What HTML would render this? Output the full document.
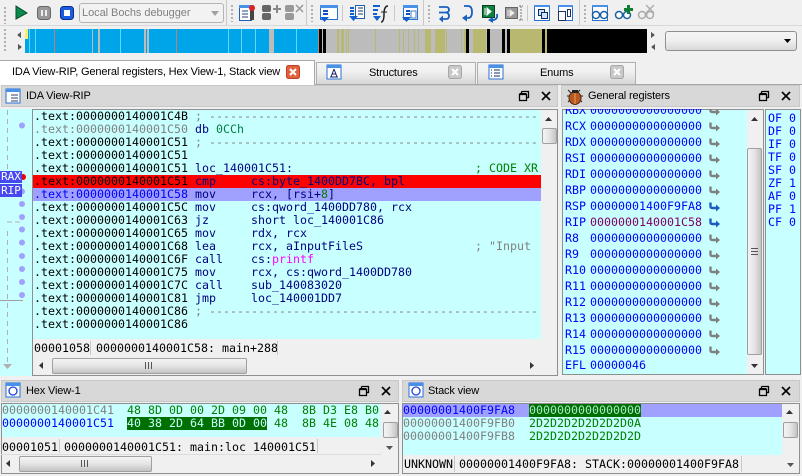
<!DOCTYPE html>
<html><head><meta charset="utf-8"><style>
html,body{margin:0;padding:0}
body{width:802px;height:476px;overflow:hidden;background:#f0f0f0;position:relative;font-family:"Liberation Sans",sans-serif;font-size:11px;letter-spacing:-.15px;color:#000}
div,span.a,svg{position:absolute}
.m{font-family:"DejaVu Sans Mono","Liberation Mono",monospace;font-size:11.63px;line-height:13px;white-space:pre;letter-spacing:0}
.l{left:0;height:13px;right:0;padding-left:1px}
.t{background:#d8d8d8;height:21px;border:1px solid #c8c8c8;box-sizing:border-box}
.tt{white-space:pre;line-height:14px;height:14px}
.c{background:#c8ffff}
.bx{border:1px solid #8c9090;box-sizing:border-box;background:#c8ffff}
.n{color:#000080}.g{color:#008000}.gr{color:#808080}.b{color:#0000ff}.k{color:#000}.y{color:#008040}
.st{background:#f0f0f0}
.sb{background:#f0f0f0}
.th{background:linear-gradient(90deg,#f4f4f4,#e4e4e4 50%,#c4c4c4);border:1px solid #a0a0a0;border-radius:2px;box-sizing:border-box}
.th2{background:linear-gradient(180deg,#f4f4f4,#e4e4e4 50%,#c4c4c4);border:1px solid #a0a0a0;border-radius:2px;box-sizing:border-box}
.sep{width:1px;background:#c8c8c8}
.grip{width:2px;background:repeating-linear-gradient(180deg,#b0b0b0 0 2px,transparent 2px 4px)}
.tab{background:linear-gradient(180deg,#f4f4f4,#f0f0f0 40%,#d6d6d6);border:1px solid #b0b0b0;border-bottom:0;box-sizing:border-box}
</style></head><body>
<svg width="0" height="0" style="position:absolute"><defs>
<symbol id="ag" viewBox="0 0 12 10"><path d="M1.5 0.5V4.5Q1.5 6 3.5 6H7" fill="none" stroke="#808080" stroke-width="2.4"/><path d="M7 2.5L11 6L7 9.5Z" fill="#808080"/></symbol>
<symbol id="ab" viewBox="0 0 12 10"><path d="M1.5 0.5V4.5Q1.5 6 3.5 6H7" fill="none" stroke="#1c5cc0" stroke-width="2.4"/><path d="M7 2.5L11 6L7 9.5Z" fill="#1c5cc0"/></symbol>
<symbol id="rs" viewBox="0 0 12 12"><path d="M3.5 1.5H10.5V7.5H8.5M3.5 1.5V3.5M1.5 4.5H8.5V10.5H1.5Z M1.5 3.7H8.5" fill="none" stroke="#000" stroke-width="1.3"/></symbol>
<symbol id="xx" viewBox="0 0 12 12"><path d="M2 2L10 10M10 2L2 10" stroke="#000" stroke-width="1.6"/></symbol>
<symbol id="win" viewBox="0 0 16 16"><rect x="1" y="1" width="14" height="14" fill="#fff" stroke="#2870d8"/><rect x="1" y="1" width="14" height="3" fill="#4890e8"/></symbol>
</defs></svg>

<!-- toolbar -->
<div class="grip" style="left:4px;top:7px;height:17px"></div>
<svg style="left:0;top:0" width="802" height="26">
<path d="M16 6L27 13L16 19Z" fill="#0a8a4a" stroke="#0a4a2a"/>
<rect x="37.500" y="6.500" width="13" height="13" rx="3" fill="#999" stroke="#666"/><rect x="41" y="10" width="2" height="6" fill="#eee"/><rect x="45" y="10" width="2" height="6" fill="#eee"/>
<rect x="60.500" y="6.500" width="13" height="13" rx="3" fill="#1a5ce0" stroke="#0a2a90"/><rect x="64" y="10" width="6" height="6" fill="#fff"/>
<!-- group 2 -->
<rect x="239.500" y="7.500" width="12" height="13" fill="#fff" stroke="#2060b0"/><rect x="239" y="5" width="15" height="3" fill="#4890e8"/><path d="M242 11h6M242 14h6M242 17h6" stroke="#204080"/><rect x="250" y="9" width="4" height="11" fill="#444"/><circle cx="252" cy="8" r="3" fill="#e02020"/>
<g fill="#666"><rect x="262" y="5" width="9" height="7" rx="2"/><rect x="262" y="13" width="9" height="7" rx="2"/><path d="M273 8h3v-3h2v3h3v2h-3v3h-2v-3h-3z" fill="#888"/></g>
<g fill="#999"><rect x="285" y="5" width="9" height="7" rx="2"/><rect x="285" y="13" width="9" height="7" rx="2"/><path d="M296 5l7 7M303 5l-7 7" stroke="#999" stroke-width="1.500"/></g>
<!-- group 3 -->
<rect x="320.500" y="5.500" width="17" height="14" fill="#fff" stroke="#2870d8"/><rect x="320" y="5" width="18" height="3" fill="#4890e8"/><path d="M323 11h5M323 14h5" stroke="#1050c0" stroke-width="2"/><path d="M320 17h9l-4.500 5z" fill="#1060d0"/>
<rect x="355.500" y="5.500" width="9" height="13" fill="#fff" stroke="#2060b0"/><path d="M358 8h5M358 11h5M358 14h5" stroke="#203060"/><path d="M350 8h4M350 11h4M350 14h4" stroke="#1060d0" stroke-width="2"/><path d="M349 16h9l-4.500 5z" fill="#1060d0"/>
<path d="M373 6h7M373 10h5M373 14h4" stroke="#1060d0" stroke-width="2"/><path d="M373 16h8l-4 5z" fill="#1060d0"/><path d="M381 22Q384 22 384 14Q384 6 388 6" fill="none" stroke="#222" stroke-width="1.500"/><path d="M381 12h6" stroke="#222"/>
<rect x="403.500" y="5.500" width="14" height="14" fill="#fff" stroke="#2870d8"/><rect x="403" y="5" width="15" height="3" fill="#4890e8"/><path d="M406 11h4M406 14h4" stroke="#1050c0" stroke-width="2"/><path d="M402 17h9l-4.500 5z" fill="#1060d0"/><rect x="411" y="11" width="5" height="7" fill="#fff" stroke="#4080c0"/>
<!-- group 4 -->
<path d="M439 7H446Q449 7 449 10Q449 12 446 12.500Q449 13 449 16Q449 19 446 19H442M439 12.500H446" fill="none" stroke="#1860c0" stroke-width="1.800"/><path d="M443 15.500L439 19L443 22.500Z" fill="#1860c0"/>
<path d="M464 6H468Q472 6 472 12Q472 18 468 18H466" fill="none" stroke="#1860c0" stroke-width="1.800"/><path d="M467 14.500L462 18L467 21.500Z" fill="#1860c0"/>
<rect x="482.500" y="5.500" width="12" height="12" fill="#108040" stroke="#064020"/><path d="M485 8v7M487 8l4 3.500L487 15Z" fill="#fff" stroke="#fff"/><path d="M497 14Q498 20 492 20" fill="none" stroke="#1860c0" stroke-width="1.800"/><path d="M493 17L488 20L493 23Z" fill="#1860c0"/>
<rect x="505.500" y="7.500" width="12" height="11" fill="#999" stroke="#666"/><path d="M508 10v6M510 10l4 3L510 16Z" fill="#eee" stroke="#eee"/><path d="M519 6h4M521 6v14M519 20h4" stroke="#777" stroke-dasharray="2 1" fill="none"/>
<rect x="534.500" y="5.500" width="15" height="15" fill="#fff" stroke="#2870d8"/><rect x="534" y="5" width="16" height="2" fill="#4890e8"/><rect x="538.500" y="9.500" width="6" height="6" fill="#cfe4fa" stroke="#103060"/><rect x="541.500" y="12.500" width="6" height="6" fill="#cfe4fa" stroke="#103060"/>
<rect x="558.500" y="5.500" width="14" height="15" fill="#fff" stroke="#2870d8"/><rect x="558" y="5" width="15" height="2" fill="#4890e8"/><rect x="558.500" y="11.500" width="7" height="9" fill="#fff" stroke="#203060"/><rect x="567.500" y="9.500" width="3" height="7" fill="#fff" stroke="#203060"/>
<!-- group 5 -->
<rect x="592.500" y="5.500" width="15" height="15" fill="#fff" stroke="#2870d8"/><rect x="592" y="5" width="16" height="2" fill="#4890e8"/><circle cx="596" cy="15" r="3.500" fill="#fff" stroke="#1860a0" stroke-width="1.500"/><circle cx="604" cy="15" r="3.500" fill="#fff" stroke="#1860a0" stroke-width="1.500"/>
<circle cx="619" cy="15" r="3.500" fill="#fff" stroke="#1860a0" stroke-width="1.500"/><circle cx="627" cy="15" r="3.500" fill="#fff" stroke="#1860a0" stroke-width="1.500"/><path d="M624 8h3V5h3v3h3v3h-3v3h-3v-3h-3z" fill="#108030"/>
<circle cx="642" cy="15" r="3.500" fill="none" stroke="#aaa" stroke-width="1.500"/><circle cx="650" cy="15" r="3.500" fill="none" stroke="#aaa" stroke-width="1.500"/><path d="M646 5l8 8M654 5l-8 8" stroke="#aaa" stroke-width="1.300"/>
</svg>
<div style="left:79px;top:3px;width:145px;height:20px;border:1px solid #b4b4b4;border-radius:3px;box-sizing:border-box;background:#f2f2f2"></div>
<div class="tt" style="left:82px;top:6px;color:#808080;letter-spacing:-.05px">Local Bochs debugger</div>
<svg style="left:210px;top:11px" width="10" height="6"><path d="M1 0H9L5 5Z" fill="#a0a0a0"/></svg>
<div class="sep" style="left:226px;top:0;height:25px"></div><div class="grip" style="left:231px;top:5px;height:17px"></div>
<div class="sep" style="left:306px;top:0;height:25px"></div><div class="grip" style="left:311px;top:5px;height:17px"></div>
<div class="sep" style="left:342px;top:5px;height:16px"></div><div class="sep" style="left:394px;top:5px;height:16px"></div>
<div class="sep" style="left:423px;top:0;height:25px"></div><div class="grip" style="left:428px;top:5px;height:17px"></div>
<div class="sep" style="left:527px;top:5px;height:16px"></div>
<div class="sep" style="left:579px;top:0;height:25px"></div><div class="grip" style="left:584px;top:5px;height:17px"></div>
<div style="left:0;top:25px;width:802px;height:1px;background:#d8d8d8"></div>

<!-- nav strip -->
<div class="grip" style="left:4px;top:29px;height:22px"></div>
<svg style="left:0;top:26px" width="802" height="30" shape-rendering="crispEdges">
<path d="M21 6v6l-4-3zM18 18v6l4-3zM651 6v6l4-3zM655 18v6l-4-3z" fill="#555"/>
<rect x="25" y="3" width="293" height="24" fill="#00a4e8"/>
<rect x="25" y="3" width="3" height="10" fill="#f8f070"/>
<g fill="#60d8f8"><rect x="29" y="3" width="1" height="24"/><rect x="35" y="3" width="1" height="24"/><rect x="120" y="3" width="1" height="24"/><rect x="228" y="3" width="1" height="24"/><rect x="241" y="3" width="1" height="24"/><rect x="255" y="3" width="1" height="24"/><rect x="296" y="3" width="1" height="24"/></g>
<g fill="#c08070"><rect x="54" y="3" width="1" height="24"/><rect x="176" y="3" width="1" height="24"/><rect x="318" y="3" width="1" height="24"/></g>
<rect x="319" y="3" width="328" height="24" fill="#bcbcbc"/>
<g fill="#bcbcbc"><rect x="92" y="3" width="1" height="24"/><rect x="98" y="3" width="2" height="24"/><rect x="144" y="3" width="2" height="24"/><rect x="147" y="3" width="2" height="24"/><rect x="269" y="3" width="5" height="24"/></g>
<g fill="#b8b870"><rect x="337" y="3" width="2" height="24"/><rect x="341" y="3" width="3" height="24"/><rect x="346" y="3" width="1" height="24"/><rect x="348" y="3" width="1" height="24"/><rect x="375" y="3" width="1" height="24"/><rect x="399" y="3" width="1" height="24"/><rect x="403" y="3" width="1" height="24"/><rect x="408" y="3" width="1" height="24"/><rect x="414" y="3" width="1" height="24"/><rect x="418" y="3" width="1" height="24"/><rect x="425" y="3" width="6" height="24"/><rect x="435" y="3" width="10" height="24"/><rect x="446" y="3" width="1" height="24"/><rect x="461" y="3" width="1" height="24"/><rect x="464" y="3" width="2" height="24"/><rect x="473" y="3" width="3" height="24"/><rect x="476" y="3" width="10" height="24"/><rect x="507" y="3" width="1" height="24"/><rect x="510" y="3" width="32" height="24"/><rect x="545" y="3" width="2" height="24"/></g>
<g fill="#000"><rect x="319" y="3" width="3" height="24"/><rect x="323" y="3" width="3" height="24"/><rect x="466" y="3" width="3" height="24"/><rect x="487" y="3" width="3" height="24"/><rect x="502" y="3" width="3" height="24"/><rect x="507" y="3" width="3" height="24"/><rect x="542" y="3" width="3" height="24"/><rect x="547" y="3" width="100" height="24"/></g>
</svg>
<div style="left:665px;top:31px;width:132px;height:20px;border:1px solid #909090;border-radius:3px;box-sizing:border-box;background:linear-gradient(180deg,#f4f4f4,#f0f0f0 45%,#d8d8d8)"></div>
<svg style="left:783px;top:39px" width="10" height="6"><path d="M1 0H8L4.500 4Z" fill="#000"/></svg>

<!-- tabs -->
<div style="left:0;top:84px;width:802px;height:1px;background:#a8a8a8"></div>
<div style="left:0;top:60px;width:315px;height:25px;background:#fff;border:1px solid #a8a8a8;border-left:0;border-bottom:0;box-sizing:border-box"></div>
<div class="tt" style="left:12px;top:65px">IDA View-RIP, General registers, Hex View-1, Stack view</div>
<svg style="left:286px;top:65px" width="14" height="14"><rect x=".5" y=".5" width="13" height="13" rx="2" fill="#e06040" stroke="#c04020"/><path d="M4 4L10 10M10 4L4 10" stroke="#fff" stroke-width="2"/></svg>
<div class="tab" style="left:316px;top:62px;width:160px;height:22px"></div>
<svg style="left:326px;top:64px" width="16" height="16"><use href="#win" width="16" height="16"/><path d="M8 5L5 13M8 5L11 13M6 10H10M4 13H12" stroke="#102060" fill="none"/></svg>
<div class="tt" style="left:369px;top:66px">Structures</div>
<svg style="left:448px;top:65px" width="14" height="14"><rect x=".5" y=".5" width="13" height="13" rx="2" fill="#c8c8c8" stroke="#a8a8a8"/><path d="M4 4L10 10M10 4L4 10" stroke="#fff" stroke-width="2"/></svg>
<div class="tab" style="left:477px;top:62px;width:159px;height:22px"></div>
<svg style="left:488px;top:64px" width="16" height="16"><use href="#win" width="16" height="16"/><path d="M6 6h6M6 9h6M6 12h6M3 6h1M3 9h1M3 12h1" stroke="#103070"/></svg>
<div class="tt" style="left:540px;top:66px">Enums</div>
<svg style="left:610px;top:65px" width="14" height="14"><rect x=".5" y=".5" width="13" height="13" rx="2" fill="#c8c8c8" stroke="#a8a8a8"/><path d="M4 4L10 10M10 4L4 10" stroke="#fff" stroke-width="2"/></svg>

<!-- IDA view panel -->
<div class="t" style="left:1px;top:85px;width:557px;height:22px"></div>
<svg style="left:5px;top:88px" width="16" height="16"><use href="#win" width="16" height="16"/><path d="M6 7h7M6 10h7M6 13h7" stroke="#304060"/></svg>
<div class="tt" style="left:26px;top:89px">IDA View-RIP</div>
<svg style="left:518px;top:90px" width="12" height="12"><use href="#rs" width="12" height="12"/></svg>
<svg style="left:540px;top:90px" width="12" height="12"><use href="#xx" width="12" height="12"/></svg>

<div class="c" style="left:0;top:109px;width:32px;height:267px"></div>
<svg style="left:0;top:109px" width="33" height="267">
<path d="M7.500 1V62M7.500 122V256" stroke="#b0b0b0" stroke-dasharray="5 4"/>
<path d="M7 113H22" stroke="#b0b0b0" stroke-dasharray="5 3"/>
<path d="M0 191.500H23" stroke="#a0a0a0"/>
<path d="M3 255H12L7.500 260Z" fill="#b0b0b0"/>
<g fill="#a0a0ff"><circle cx="22" cy="16.500" r="3"/><circle cx="22" cy="82.500" r="3"/><circle cx="22" cy="95" r="3"/><circle cx="22" cy="108" r="3"/><circle cx="22" cy="120.500" r="3"/><circle cx="22" cy="133.500" r="3"/><circle cx="22" cy="147" r="3"/><circle cx="22" cy="160" r="3"/><circle cx="22" cy="173" r="3"/><circle cx="22" cy="186" r="3"/></g>
<circle cx="23" cy="68" r="3" fill="#f00000"/>
</svg>
<div class="m" style="left:0;top:171px;width:22px;height:12px;background:#4848f0;color:#fff;line-height:12px;font-size:11px;text-align:center">RAX</div>
<div class="m" style="left:0;top:184px;width:22px;height:13px;background:#4848f0;color:#fff;line-height:13px;font-size:11px;text-align:center">RIP</div>

<div class="bx" style="left:32px;top:109px;width:526px;height:267px"></div>
<div class="m k" style="left:33px;top:110px;width:508px;height:229px;overflow:hidden">
<div class="l" style="top:0">.text:0000000140001C4B <span class="gr">; -----------------------------------------------</span></div>
<div class="l" style="top:13px"><span class="gr">.text:0000000140001C50</span> <span class="n">db </span><span class="y">0CCh</span></div>
<div class="l" style="top:26px">.text:0000000140001C51 <span class="gr">; -----------------------------------------------</span></div>
<div class="l" style="top:39px">.text:0000000140001C51</div>
<div class="l" style="top:52px">.text:0000000140001C51 <span class="n">loc_140001C51:</span>                          <span class="g">; CODE XR</span></div>
<div class="l" style="top:65px;background:#ff0000">.text:0000000140001C51 <span class="n">cmp     cs:byte_1400DD7BC, bpl</span></div>
<div class="l" style="top:78px;background:#a0a0ff"><span class="b">.text:0000000140001C58</span> <span class="n">mov     rcx, [rsi+</span><span class="g">8</span><span class="n">]</span></div>
<div class="l" style="top:91px">.text:0000000140001C5C <span class="n">mov     cs:qword_1400DD780, rcx</span></div>
<div class="l" style="top:104px">.text:0000000140001C63 <span class="n">jz      short loc_140001C86</span></div>
<div class="l" style="top:117px">.text:0000000140001C65 <span class="n">mov     rdx, rcx</span></div>
<div class="l" style="top:130px">.text:0000000140001C68 <span class="n">lea     rcx, aInputFileS</span>                <span class="gr">; "Input</span></div>
<div class="l" style="top:143px">.text:0000000140001C6F <span class="n">call    cs:</span><span style="color:#ff00ff">printf</span></div>
<div class="l" style="top:156px">.text:0000000140001C75 <span class="n">mov     rcx, cs:qword_1400DD780</span></div>
<div class="l" style="top:169px">.text:0000000140001C7C <span class="n">call    sub_140083020</span></div>
<div class="l" style="top:182px">.text:0000000140001C81 <span class="n">jmp     loc_140001DD7</span></div>
<div class="l" style="top:195px">.text:0000000140001C86 <span class="gr">; -----------------------------------------------</span></div>
<div class="l" style="top:208px">.text:0000000140001C86</div>
</div>
<div class="sb" style="left:541px;top:110px;width:16px;height:229px"></div>
<svg style="left:545px;top:117px" width="8" height="5"><path d="M0 4H7L3.500 0Z" fill="#333"/></svg>
<div class="th" style="left:542px;top:128px;width:15px;height:16px"></div>
<div class="st m" style="left:33px;top:339px;width:524px;height:18px;line-height:18px;color:#000"></div>
<div class="m" style="left:34px;top:342px;color:#000">00001058</div><div class="sep" style="left:90px;top:341px;height:14px"></div>
<div class="m" style="left:96px;top:342px;color:#000">0000000140001C58: main+288</div><div class="sep" style="left:277px;top:341px;height:14px"></div>
<div class="sb" style="left:33px;top:357px;width:524px;height:18px"></div>
<svg style="left:39px;top:362px" width="6" height="8"><path d="M4 0V7L0 3.500Z" fill="#333"/></svg>
<div class="th2" style="left:52px;top:358px;width:195px;height:16px"></div>
<div style="left:145px;top:362px;width:8px;height:7px;background:repeating-linear-gradient(90deg,#555 0 1px,transparent 1px 3px)"></div>
<svg style="left:530px;top:362px" width="6" height="8"><path d="M0 0V7L4 3.500Z" fill="#333"/></svg>

<!-- General registers -->
<div class="t" style="left:561px;top:85px;width:239px;height:22px"></div>
<svg style="left:566px;top:88px" width="18" height="17"><path d="M2 2L5 5M14 2L11 5M1 8H4M17 8H14M2 14L4 12M16 14L14 12" stroke="#222"/><ellipse cx="9" cy="10" rx="6" ry="6.500" fill="#b85a20" stroke="#502010"/><path d="M9 4V16" stroke="#e8a060"/><rect x="6" y="2" width="6" height="3" fill="#222"/></svg>
<div class="tt" style="left:588px;top:89px">General registers</div>
<svg style="left:758px;top:90px" width="12" height="12"><use href="#rs" width="12" height="12"/></svg>
<svg style="left:780px;top:90px" width="12" height="12"><use href="#xx" width="12" height="12"/></svg>

<div class="bx" style="left:562px;top:109px;width:202px;height:266px"></div>
<div class="m b" style="left:563px;top:104px;width:184px;height:270px;overflow:hidden;color:#0000ff;clip-path:inset(5px 0 0 0)">
<div style="left:2px;top:0">RBX</div><div style="left:27px;top:0">0000000000000000</div>
<div style="left:2px;top:16px">RCX</div><div style="left:27px;top:16px">0000000000000000</div>
<div style="left:2px;top:32px">RDX</div><div style="left:27px;top:32px">0000000000000000</div>
<div style="left:2px;top:48px">RSI</div><div style="left:27px;top:48px">0000000000000000</div>
<div style="left:2px;top:64px">RDI</div><div style="left:27px;top:64px">0000000000000000</div>
<div style="left:2px;top:80px">RBP</div><div style="left:27px;top:80px">0000000000000000</div>
<div style="left:2px;top:96px">RSP</div><div style="left:27px;top:96px">00000001400F9FA8</div>
<div style="left:2px;top:112px">RIP</div><div style="left:27px;top:112px;color:#800060">0000000140001C58</div>
<div style="left:2px;top:128px">R8</div><div style="left:27px;top:128px">0000000000000000</div>
<div style="left:2px;top:144px">R9</div><div style="left:27px;top:144px">0000000000000000</div>
<div style="left:2px;top:160px">R10</div><div style="left:27px;top:160px">0000000000000000</div>
<div style="left:2px;top:176px">R11</div><div style="left:27px;top:176px">0000000000000000</div>
<div style="left:2px;top:192px">R12</div><div style="left:27px;top:192px">0000000000000000</div>
<div style="left:2px;top:208px">R13</div><div style="left:27px;top:208px">0000000000000000</div>
<div style="left:2px;top:224px">R14</div><div style="left:27px;top:224px">0000000000000000</div>
<div style="left:2px;top:240px">R15</div><div style="left:27px;top:240px">0000000000000000</div>
<div style="left:2px;top:255px">EFL</div><div style="left:27px;top:255px">00000046</div>
<svg style="left:146px;top:0" width="14" height="270">
<use href="#ag" y="2" width="12" height="10"/><use href="#ag" y="18" width="12" height="10"/><use href="#ag" y="34" width="12" height="10"/><use href="#ag" y="50" width="12" height="10"/><use href="#ag" y="66" width="12" height="10"/><use href="#ag" y="82" width="12" height="10"/><use href="#ab" y="98" width="12" height="10"/><use href="#ab" y="114" width="12" height="10"/><use href="#ag" y="130" width="12" height="10"/><use href="#ag" y="146" width="12" height="10"/><use href="#ag" y="162" width="12" height="10"/><use href="#ag" y="178" width="12" height="10"/><use href="#ag" y="194" width="12" height="10"/><use href="#ag" y="210" width="12" height="10"/><use href="#ag" y="226" width="12" height="10"/><use href="#ag" y="242" width="12" height="10"/>
</svg>
</div>
<div class="sb" style="left:747px;top:110px;width:16px;height:264px"></div>
<svg style="left:751px;top:117px" width="8" height="5"><path d="M0 4H7L3.500 0Z" fill="#333"/></svg>
<div class="th" style="left:747px;top:148px;width:15px;height:207px"></div>
<div style="left:751px;top:248px;width:7px;height:8px;background:repeating-linear-gradient(180deg,#555 0 1px,transparent 1px 3px)"></div>
<svg style="left:751px;top:364px" width="8" height="5"><path d="M0 0H7L3.500 4Z" fill="#333"/></svg>

<div class="bx" style="left:765px;top:109px;width:36px;height:266px"></div>
<div class="m b" style="left:768px;top:112px;color:#0000ff;line-height:13px">OF 0
DF 0
IF 0
TF 0
SF 0
ZF 1
AF 0
PF 1
CF 0</div>

<!-- Hex view -->
<div class="t" style="left:1px;top:380px;width:398px;height:22px"></div>
<svg style="left:5px;top:382px" width="16" height="16"><use href="#win" width="16" height="16"/><circle cx="8" cy="9" r="4" fill="none" stroke="#2040e0" stroke-width="1.300"/></svg>
<div class="tt" style="left:26px;top:384px">Hex View-1</div>
<svg style="left:358px;top:385px" width="12" height="12"><use href="#rs" width="12" height="12"/></svg>
<svg style="left:380px;top:385px" width="12" height="12"><use href="#xx" width="12" height="12"/></svg>
<div class="bx" style="left:1px;top:403px;width:398px;height:71px;background:#f0f0f0"></div>
<div class="c" style="left:2px;top:404px;width:379px;height:33px"></div>
<div class="m gr" style="left:2px;top:404px">0000000140001C41</div>
<div class="m g" style="left:127px;top:404px">48 8D 0D 00 2D 09 00 48  8B D3 E8 B0</div>
<div class="m b" style="left:2px;top:417px">0000000140001C51</div>
<div style="left:127px;top:417px;width:140px;height:13px;background:#007000"></div>
<div class="m" style="left:127px;top:417px;color:#c8ffff">40 38 2D 64 BB 0D 00</div>
<div class="m g" style="left:127px;top:417px">                     48  8B 4E 08 48</div>
<div class="m k" style="left:2px;top:441px">00001051</div><div class="sep" style="left:59px;top:439px;height:14px"></div>
<div class="m k" style="left:64px;top:441px">0000000140001C51: main:loc 140001C51</div><div class="sep" style="left:317px;top:439px;height:14px"></div>
<svg style="left:384px;top:410px" width="8" height="5"><path d="M0 4H7L3.500 0Z" fill="#333"/></svg>
<div class="th" style="left:383px;top:422px;width:15px;height:16px"></div>
<svg style="left:386px;top:446px" width="8" height="5"><path d="M0 0H7L3.500 4Z" fill="#555"/></svg>
<div class="th2" style="left:19px;top:456px;width:133px;height:16px"></div>
<div style="left:81px;top:460px;width:8px;height:7px;background:repeating-linear-gradient(90deg,#555 0 1px,transparent 1px 3px)"></div>
<svg style="left:6px;top:460px" width="6" height="8"><path d="M4 0V7L0 3.500Z" fill="#333"/></svg>
<svg style="left:371px;top:460px" width="6" height="8"><path d="M0 0V7L4 3.500Z" fill="#333"/></svg>
<div style="left:1px;top:454px;width:380px;height:1px;background:#dcdcdc"></div>

<!-- Stack view -->
<div style="left:400px;top:378px;width:2px;height:98px;background:#f0f0f0"></div>
<div class="t" style="left:402px;top:380px;width:398px;height:22px"></div>
<svg style="left:408px;top:382px" width="16" height="16"><use href="#win" width="16" height="16"/><circle cx="8" cy="9" r="4" fill="none" stroke="#2040e0" stroke-width="1.300"/></svg>
<div class="tt" style="left:428px;top:384px">Stack view</div>
<svg style="left:758px;top:385px" width="12" height="12"><use href="#rs" width="12" height="12"/></svg>
<svg style="left:780px;top:385px" width="12" height="12"><use href="#xx" width="12" height="12"/></svg>
<div class="bx" style="left:402px;top:403px;width:398px;height:71px;background:#f0f0f0"></div>
<div class="c" style="left:403px;top:404px;width:379px;height:51px"></div>
<div style="left:403px;top:404px;width:379px;height:13px;background:#a0a0ff"></div>
<div style="left:529px;top:404px;width:112px;height:13px;background:#007000"></div>
<div class="m b" style="left:403px;top:404px">00000001400F9FA8</div>
<div class="m" style="left:529px;top:404px;color:#a8e8c8">0000000000000000</div>
<div class="m gr" style="left:403px;top:417px">00000001400F9FB0</div><div class="m g" style="left:529px;top:417px">2D2D2D2D2D2D2D0A</div>
<div class="m gr" style="left:403px;top:430px">00000001400F9FB8</div><div class="m g" style="left:529px;top:430px">2D2D2D2D2D2D2D2D</div>
<div class="m k" style="left:404px;top:458px">UNKNOWN</div><div class="sep" style="left:454px;top:456px;height:16px"></div>
<div class="m k" style="left:459px;top:458px">00000001400F9FA8: STACK:00000001400F9FA8</div><div class="sep" style="left:741px;top:456px;height:16px"></div>
<svg style="left:786px;top:410px" width="8" height="5"><path d="M0 4H7L3.500 0Z" fill="#333"/></svg>
<div class="th" style="left:783px;top:422px;width:15px;height:16px"></div>
<svg style="left:787px;top:463px" width="8" height="5"><path d="M0 0H7L3.500 4Z" fill="#555"/></svg>
</body></html>
